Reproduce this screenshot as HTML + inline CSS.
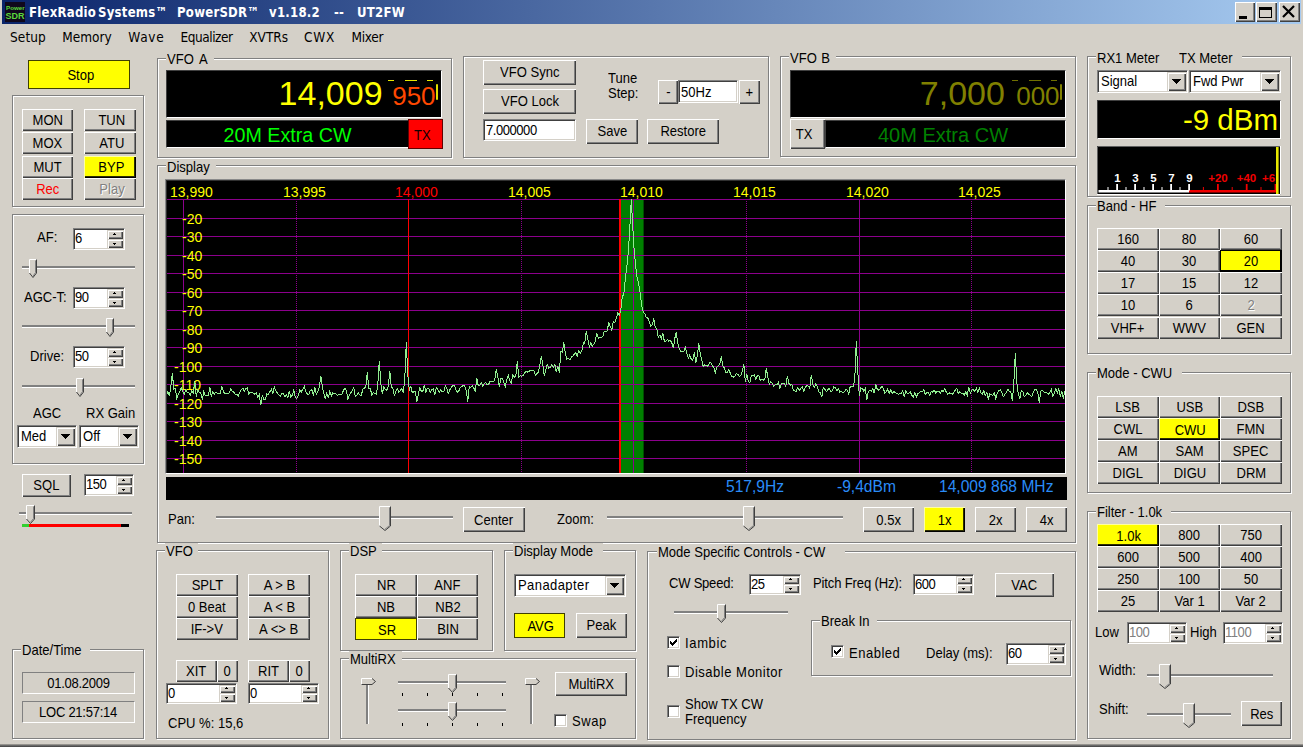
<!DOCTYPE html>
<html><head><meta charset="utf-8"><title>PowerSDR</title>
<style>
html,body{margin:0;padding:0}
body{width:1303px;height:747px;overflow:hidden;background:#d4d0c8;position:relative;
 font-family:"Liberation Sans",sans-serif;font-size:14.4px;color:#000}
.x{display:inline-block;transform:scaleX(.905);transform-origin:0 50%}
.xc{display:inline-block;transform:scaleX(.905);transform-origin:50% 50%}
div,svg{box-sizing:border-box}
.a{position:absolute}
.t{position:absolute;white-space:nowrap;line-height:16px;height:16px}
.b{position:absolute;text-align:center;background:#d4d0c8;white-space:nowrap;overflow:hidden;
 box-shadow:inset 1px 1px 0 #fff,inset -1px -1px 0 #404040,inset -2px -2px 0 #808080}
.b.y{background:#ffff00;box-shadow:inset 1px 1px 0 #ffffa0,inset -1px -1px 0 #000,inset -2px -2px 0 #303000}
.b.yf{background:#ffff00;box-shadow:inset 0 0 0 1px #404000}
.g{position:absolute;border:1px solid #808080;box-shadow:1px 1px 0 #fff,inset 1px 1px 0 #fff}
.gl{position:absolute;background:#d4d0c8;padding:0 2px 0 1px;line-height:16px;height:16px;white-space:nowrap}
.f{position:absolute;border:1px solid;border-color:#808080 #fff #fff #808080;padding-left:2px;white-space:nowrap;overflow:hidden;
 background:linear-gradient(#404040,#404040) 0 0/100% 1px no-repeat,linear-gradient(#404040,#404040) 0 0/1px 100% no-repeat,
 linear-gradient(#d4d0c8,#d4d0c8) 0 100%/100% 1px no-repeat,linear-gradient(#d4d0c8,#d4d0c8) 100% 0/1px 100% no-repeat,#fff}
.sb{position:absolute;right:1px;width:16px;background:#d4d0c8;
 box-shadow:inset 1px 1px 0 #d4d0c8,inset 2px 2px 0 #fff,inset -1px -1px 0 #404040,inset -2px -2px 0 #808080}
.cb{position:absolute;right:1px;top:1px;width:19px;background:#d4d0c8;
 box-shadow:inset 1px 1px 0 #d4d0c8,inset 2px 2px 0 #fff,inset -1px -1px 0 #404040,inset -2px -2px 0 #808080}
.tr{position:absolute;height:3px;background:#808080;border-bottom:1px solid #fff;border-top:1px solid #808080}
.trv{position:absolute;width:3px;background:#808080;border-right:1px solid #fff}
.ck{position:absolute;width:13px;height:13px;background:#fff;border:1px solid;border-color:#808080 #fff #fff #808080;box-shadow:inset 1px 1px 0 #404040,inset -1px -1px 0 #d4d0c8}
.sk{position:absolute;border:1px solid;border-color:#808080 #fff #fff #808080;text-align:center;white-space:nowrap}
.bk{position:absolute;background:#000;overflow:hidden}
#title{position:absolute;left:2px;top:0;width:1299px;height:24px;
 background:linear-gradient(90deg,#0a246a 0%,#a6caf0 100%);}
#title .tt{position:absolute;top:3px;color:#fff;font-family:"DejaVu Sans Condensed","DejaVu Sans",sans-serif;font-weight:bold;font-size:14px;letter-spacing:.27px;line-height:18px;white-space:nowrap;transform:scaleX(.93);transform-origin:0 50%}
.m{position:absolute;top:28px;font-family:"DejaVu Sans Condensed","DejaVu Sans",sans-serif;font-size:13.5px;line-height:18px;white-space:nowrap}
</style></head><body>

<div id="title">
<svg class="a" style="left:3px;top:2px" width="20" height="20" viewBox="0 0 20 20"><rect width="20" height="20" fill="#10081c"/><text x="1" y="8" font-family="Liberation Sans,sans-serif" font-size="6.2" font-weight="bold" fill="#5ad83c">Power</text><text x="0.5" y="16.5" font-family="Liberation Sans,sans-serif" font-size="9" font-weight="bold" fill="#5ad83c">SDR</text></svg>
<div class="tt" style="left:26.7px">FlexRadio</div>
<div class="tt" style="left:96.4px">Systems™</div>
<div class="tt" style="left:174.8px">PowerSDR™</div>
<div class="tt" style="left:267.3px">v1.18.2</div>
<div class="tt" style="left:332px">--</div>
<div class="tt" style="left:355.4px">UT2FW</div>
<div class="b" style="left:1233px;top:2px;width:20px;height:20px">
<div class="a" style="left:4px;top:14px;width:8px;height:3px;background:#000"></div>
</div>
<div class="b" style="left:1254px;top:2px;width:21px;height:20px">
<div class="a" style="left:3px;top:5px;width:13px;height:11px;border:1.5px solid #000;border-top-width:3px"></div>
</div>
<div class="b" style="left:1277px;top:2px;width:21px;height:20px">
<svg class="a" style="left:3px;top:3px" width="13" height="13" viewBox="0 0 13 13"><path d="M1 1L12 12M12 1L1 12" stroke="#000" stroke-width="2.2"/></svg>
</div>
</div>
<div class="m" style="left:10px;letter-spacing:0.1px">Setup</div>
<div class="m" style="left:62.3px;letter-spacing:0px">Memory</div>
<div class="m" style="left:128.3px;letter-spacing:0.7px">Wave</div>
<div class="m" style="left:180.5px;letter-spacing:-0.45px">Equalizer</div>
<div class="m" style="left:249.3px;letter-spacing:0px">XVTRs</div>
<div class="m" style="left:304px;letter-spacing:0.8px">CWX</div>
<div class="m" style="left:351.5px;letter-spacing:-0.3px">Mixer</div>
<div class="b yf" style="left:28px;top:60px;width:102px;height:29px;line-height:29px;"><span style="position:relative;left:1.5px;top:1px"><span class="xc">Stop</span></span></div>
<div class="g" style="left:12px;top:95px;width:132px;height:112px"></div>
<div class="b " style="left:22px;top:109px;width:51px;height:22px;line-height:22px;"><span class="xc">MON</span></div>
<div class="b " style="left:84px;top:109px;width:52px;height:22px;line-height:22px;"><span style="position:relative;left:1.5px;top:0px"><span class="xc">TUN</span></span></div>
<div class="b " style="left:22px;top:132px;width:51px;height:22px;line-height:22px;"><span class="xc">MOX</span></div>
<div class="b " style="left:84px;top:132px;width:52px;height:22px;line-height:22px;"><span style="position:relative;left:1.5px;top:0px"><span class="xc">ATU</span></span></div>
<div class="b " style="left:22px;top:156px;width:51px;height:22px;line-height:22px;"><span class="xc">MUT</span></div>
<div class="b y" style="left:84px;top:156px;width:52px;height:22px;line-height:22px;"><span style="position:relative;left:1.5px;top:0px"><span class="xc">BYP</span></span></div>
<div class="b " style="left:22px;top:178px;width:51px;height:22px;line-height:22px;color:#ff0000;"><span class="xc">Rec</span></div>
<div class="b " style="left:84px;top:178px;width:52px;height:22px;line-height:22px;color:#808080;text-shadow:1px 1px 0 #fff;"><span style="position:relative;left:1.5px;top:0px"><span class="xc">Play</span></span></div>
<div class="g" style="left:12px;top:214px;width:132px;height:250px"></div>
<div class="t" style="left:37px;top:229px;"><span class="x">AF:</span></div>
<div class="f" style="left:73px;top:228px;width:52px;height:22px;line-height:19px;color:#000;letter-spacing:-0.5px;padding-left:1px"><span class="x">6</span><div class="sb" style="top:1px;height:9px"><svg class="a" style="left:5px;top:3px" width="5" height="3" viewBox="0 0 5 3" shape-rendering="crispEdges"><path d="M2 0h1v1h-1zM1 1h3v1h-3z" fill="#000"/></svg></div><div class="sb" style="top:10px;height:9px"><svg class="a" style="left:5px;top:3px" width="5" height="3" viewBox="0 0 5 3" shape-rendering="crispEdges"><path d="M1 1h3v1h-3zM2 2h1v1h-1z" fill="#000"/></svg></div></div>
<div class="tr" style="left:22px;top:266px;width:113px"></div>
<svg class="a" style="left:28.5px;top:259px" width="9" height="20" viewBox="0 0 9 20"><polygon points="0,0 8,0 8,14 4.0,19 0,14" fill="#d4d0c8"/><polyline points="0.5,14 0.5,0.5 7.5,0.5" fill="none" stroke="#fff"/><polyline points="7.5,0.5 7.5,14 4.0,18.5 0.5,14" fill="none" stroke="#404040"/><polyline points="6.5,1.5 6.5,13.5 4.0,17.2" fill="none" stroke="#808080"/></svg>
<div class="t" style="left:24px;top:289px;"><span class="x">AGC-T:</span></div>
<div class="f" style="left:73px;top:287px;width:52px;height:22px;line-height:19px;color:#000;letter-spacing:-0.5px;padding-left:1px"><span class="x">90</span><div class="sb" style="top:1px;height:9px"><svg class="a" style="left:5px;top:3px" width="5" height="3" viewBox="0 0 5 3" shape-rendering="crispEdges"><path d="M2 0h1v1h-1zM1 1h3v1h-3z" fill="#000"/></svg></div><div class="sb" style="top:10px;height:9px"><svg class="a" style="left:5px;top:3px" width="5" height="3" viewBox="0 0 5 3" shape-rendering="crispEdges"><path d="M1 1h3v1h-3zM2 2h1v1h-1z" fill="#000"/></svg></div></div>
<div class="tr" style="left:22px;top:325px;width:113px"></div>
<svg class="a" style="left:106px;top:318px" width="9" height="20" viewBox="0 0 9 20"><polygon points="0,0 8,0 8,14 4.0,19 0,14" fill="#d4d0c8"/><polyline points="0.5,14 0.5,0.5 7.5,0.5" fill="none" stroke="#fff"/><polyline points="7.5,0.5 7.5,14 4.0,18.5 0.5,14" fill="none" stroke="#404040"/><polyline points="6.5,1.5 6.5,13.5 4.0,17.2" fill="none" stroke="#808080"/></svg>
<div class="t" style="left:30px;top:348px;"><span class="x">Drive:</span></div>
<div class="f" style="left:73px;top:346px;width:52px;height:22px;line-height:19px;color:#000;letter-spacing:-0.5px;padding-left:1px"><span class="x">50</span><div class="sb" style="top:1px;height:9px"><svg class="a" style="left:5px;top:3px" width="5" height="3" viewBox="0 0 5 3" shape-rendering="crispEdges"><path d="M2 0h1v1h-1zM1 1h3v1h-3z" fill="#000"/></svg></div><div class="sb" style="top:10px;height:9px"><svg class="a" style="left:5px;top:3px" width="5" height="3" viewBox="0 0 5 3" shape-rendering="crispEdges"><path d="M1 1h3v1h-3zM2 2h1v1h-1z" fill="#000"/></svg></div></div>
<div class="tr" style="left:22px;top:385px;width:113px"></div>
<svg class="a" style="left:76px;top:378px" width="9" height="20" viewBox="0 0 9 20"><polygon points="0,0 8,0 8,14 4.0,19 0,14" fill="#d4d0c8"/><polyline points="0.5,14 0.5,0.5 7.5,0.5" fill="none" stroke="#fff"/><polyline points="7.5,0.5 7.5,14 4.0,18.5 0.5,14" fill="none" stroke="#404040"/><polyline points="6.5,1.5 6.5,13.5 4.0,17.2" fill="none" stroke="#808080"/></svg>
<div class="t" style="left:33px;top:405px;"><span class="x">AGC</span></div>
<div class="t" style="left:86px;top:405px;"><span class="x">RX Gain</span></div>
<div class="f" style="left:17px;top:425px;width:60px;height:23px;line-height:21px;padding-left:3px;letter-spacing:0px"><span class="x">Med</span><div class="cb" style="height:19px"><svg class="a" style="left:5px;top:7px" width="9" height="5" viewBox="0 0 9 5" shape-rendering="crispEdges"><path d="M0 0h9v1h-9zM1 1h7v1h-7zM2 2h5v1h-5zM3 3h3v1h-3zM4 4h1v1h-1z" fill="#000"/></svg></div></div>
<div class="f" style="left:79px;top:425px;width:60px;height:23px;line-height:21px;padding-left:3px;letter-spacing:0px"><span class="x">Off</span><div class="cb" style="height:19px"><svg class="a" style="left:5px;top:7px" width="9" height="5" viewBox="0 0 9 5" shape-rendering="crispEdges"><path d="M0 0h9v1h-9zM1 1h7v1h-7zM2 2h5v1h-5zM3 3h3v1h-3zM4 4h1v1h-1z" fill="#000"/></svg></div></div>
<div class="b " style="left:22px;top:474px;width:49px;height:23px;line-height:23px;"><span class="xc">SQL</span></div>
<div class="f" style="left:84px;top:474px;width:50px;height:22px;line-height:19px;color:#000;letter-spacing:-0.5px;padding-left:1px"><span class="x">150</span><div class="sb" style="top:1px;height:9px"><svg class="a" style="left:5px;top:3px" width="5" height="3" viewBox="0 0 5 3" shape-rendering="crispEdges"><path d="M2 0h1v1h-1zM1 1h3v1h-3z" fill="#000"/></svg></div><div class="sb" style="top:10px;height:9px"><svg class="a" style="left:5px;top:3px" width="5" height="3" viewBox="0 0 5 3" shape-rendering="crispEdges"><path d="M1 1h3v1h-3zM2 2h1v1h-1z" fill="#000"/></svg></div></div>
<div class="tr" style="left:19px;top:512px;width:113px"></div>
<svg class="a" style="left:26px;top:505px" width="10" height="20" viewBox="0 0 10 20"><polygon points="0,0 9,0 9,14 4.5,19 0,14" fill="#d4d0c8"/><polyline points="0.5,14 0.5,0.5 8.5,0.5" fill="none" stroke="#fff"/><polyline points="8.5,0.5 8.5,14 4.5,18.5 0.5,14" fill="none" stroke="#404040"/><polyline points="7.5,1.5 7.5,13.5 4.5,17.2" fill="none" stroke="#808080"/></svg>
<div class="a" style="left:22px;top:524px;width:107px;height:3px;background:#ff0000"></div>
<div class="a" style="left:22px;top:524px;width:7px;height:3px;background:#30d030"></div>
<div class="a" style="left:121px;top:524px;width:8px;height:3px;background:#000"></div>
<div class="g" style="left:12px;top:649px;width:132px;height:90px"></div>
<div class="gl" style="left:21px;top:642px"><span class="x">Date/Time</span></div>
<div class="sk" style="left:22px;top:672px;width:113px;height:22px;line-height:20px;letter-spacing:-.3px"><span class="xc">01.08.2009</span></div>
<div class="sk" style="left:22px;top:701px;width:113px;height:22px;line-height:20px;letter-spacing:-.3px"><span class="xc">LOC 21:57:14</span></div>
<div class="g" style="left:157px;top:58px;width:295px;height:100px"></div>
<div class="gl" style="left:166px;top:51px;word-spacing:2.5px"><span class="x">VFO A</span></div>
<div class="bk" style="left:166px;top:70px;width:276px;height:48px;border:1px solid;border-color:#404040 #fff #fff #404040"><div class="a" style="left:111.6px;top:2.5px;font-size:34px;line-height:38px;color:#ffff00">14,009</div><div class="a" style="left:225.2px;top:10.4px;font-size:26px;line-height:30px;color:#ff4800">950</div><div class="a" style="left:221px;top:9px;width:6px;height:1px;background:#e8e800"></div><div class="a" style="left:238px;top:9px;width:12px;height:1px;background:#e8e800"></div><div class="a" style="left:260px;top:9px;width:6px;height:1px;background:#e8e800"></div><div class="a" style="left:269px;top:13px;width:2px;height:16px;background:#e0e000;border-radius:1px"></div></div>
<div class="bk" style="left:166px;top:120px;width:277px;height:28px;border:1px solid;border-color:#404040 #fff #fff #404040"><div class="a" style="left:56.5px;top:2px;font-size:19.7px;line-height:24px;color:#00ff00">20M Extra CW</div></div>
<div class="a" style="left:408px;top:119px;width:35px;height:30px;background:#ff0000;border:1px solid #600000;text-align:center;line-height:31px;font-size:14.4px;color:#100000;text-indent:-3px"><span class="xc">TX</span></div>
<div class="g" style="left:463px;top:56px;width:306px;height:102px"></div>
<div class="b " style="left:483px;top:60px;width:93px;height:25px;line-height:25px;"><span class="xc">VFO Sync</span></div>
<div class="b " style="left:483px;top:89px;width:93px;height:25px;line-height:25px;"><span class="xc">VFO Lock</span></div>
<div class="f" style="left:483px;top:119px;width:93px;height:22px;line-height:21px;letter-spacing:-.5px"><span class="x">7.000000</span></div>
<div class="b " style="left:586px;top:119px;width:52px;height:25px;line-height:25px;"><span class="xc">Save</span></div>
<div class="b " style="left:647px;top:119px;width:72px;height:25px;line-height:25px;"><span class="xc">Restore</span></div>
<div class="t" style="left:608px;top:70px;"><span class="x">Tune</span></div>
<div class="t" style="left:608px;top:85px;"><span class="x">Step:</span></div>
<div class="b " style="left:658px;top:80px;width:20px;height:24px;line-height:24px;"><span class="xc">-</span></div>
<div class="f" style="left:678px;top:80px;width:60px;height:23px;line-height:22px;"><span class="x">50Hz</span></div>
<div class="b " style="left:739px;top:80px;width:21px;height:24px;line-height:24px;"><span class="xc">+</span></div>
<div class="g" style="left:780px;top:56px;width:296px;height:101px"></div>
<div class="gl" style="left:789px;top:50px;word-spacing:1px"><span class="x">VFO B</span></div>
<div class="bk" style="left:790px;top:70px;width:276px;height:48px;border:1px solid;border-color:#404040 #fff #fff #404040"><div class="a" style="left:128.8px;top:2.5px;font-size:34px;line-height:38px;color:#808000">7,000</div><div class="a" style="left:225.2px;top:10.4px;font-size:26px;line-height:30px;color:#808000">000</div><div class="a" style="left:221px;top:9px;width:6px;height:1px;background:#707000"></div><div class="a" style="left:238px;top:9px;width:12px;height:1px;background:#707000"></div><div class="a" style="left:260px;top:9px;width:6px;height:1px;background:#707000"></div><div class="a" style="left:269px;top:13px;width:2px;height:16px;background:#808000;border-radius:1px"></div></div>
<div class="b " style="left:790px;top:119px;width:35px;height:30px;line-height:30px;"><span style="position:relative;left:-3px;top:0px"><span class="xc">TX</span></span></div>
<div class="bk" style="left:825px;top:120px;width:241px;height:28px;border:1px solid;border-color:#404040 #fff #fff #404040"><div class="a" style="left:52px;top:2px;font-size:20px;line-height:24px;color:#008000">40M Extra CW</div></div>
<div class="g" style="left:1087px;top:56px;width:204px;height:141px"></div>
<div class="gl" style="left:1096px;top:50px;width:90px"><span class="x">RX1 Meter</span></div>
<div class="gl" style="left:1178px;top:50px;width:64px"><span class="x">TX Meter</span></div>
<div class="f" style="left:1097px;top:70px;width:91px;height:23px;line-height:21px;padding-left:3px;letter-spacing:0px"><span class="x">Signal</span><div class="cb" style="height:19px"><svg class="a" style="left:5px;top:7px" width="9" height="5" viewBox="0 0 9 5" shape-rendering="crispEdges"><path d="M0 0h9v1h-9zM1 1h7v1h-7zM2 2h5v1h-5zM3 3h3v1h-3zM4 4h1v1h-1z" fill="#000"/></svg></div></div>
<div class="f" style="left:1189px;top:70px;width:92px;height:23px;line-height:21px;padding-left:3px;letter-spacing:0px"><span class="x">Fwd Pwr</span><div class="cb" style="height:19px"><svg class="a" style="left:5px;top:7px" width="9" height="5" viewBox="0 0 9 5" shape-rendering="crispEdges"><path d="M0 0h9v1h-9zM1 1h7v1h-7zM2 2h5v1h-5zM3 3h3v1h-3zM4 4h1v1h-1z" fill="#000"/></svg></div></div>
<div class="bk" style="left:1097px;top:100px;width:184px;height:39px;border:1px solid;border-color:#404040 #fff #fff #404040"><div class="a" style="right:2px;top:1.5px;font-size:29.5px;line-height:34px;color:#ffff00">-9 dBm</div></div>
<svg class="a" style="left:1097px;top:146px" width="184" height="49" viewBox="0 0 184 49"><rect width="184" height="49" fill="#000"/><path d="M0.5 49V0.5H184" fill="none" stroke="#606060"/><path d="M0 48.5H183.5V0" fill="none" stroke="#fff"/><rect x="1.5" y="44" width="90.5" height="2.5" fill="#fff"/><rect x="92" y="44" width="87" height="2.5" fill="#f00000"/><rect x="10.5" y="41" width="1" height="3.5" fill="#fff"/><rect x="19.2" y="38" width="1.8" height="6.5" fill="#fff"/><rect x="28.5" y="41" width="1" height="3.5" fill="#fff"/><rect x="37.2" y="38" width="1.8" height="6.5" fill="#fff"/><rect x="46.5" y="41" width="1" height="3.5" fill="#fff"/><rect x="55.2" y="38" width="1.8" height="6.5" fill="#fff"/><rect x="64.5" y="41" width="1" height="3.5" fill="#fff"/><rect x="73.2" y="38" width="1.8" height="6.5" fill="#fff"/><rect x="82.5" y="41" width="1" height="3.5" fill="#fff"/><rect x="91.2" y="38" width="1.8" height="6.5" fill="#fff"/><rect x="105.9" y="41" width="1" height="3.5" fill="#f00000"/><rect x="120.0" y="38" width="1.8" height="6.5" fill="#f00000"/><rect x="134.7" y="41" width="1" height="3.5" fill="#f00000"/><rect x="148.8" y="38" width="1.8" height="6.5" fill="#f00000"/><rect x="163.5" y="41" width="1" height="3.5" fill="#f00000"/><rect x="177.6" y="38" width="1.8" height="6.5" fill="#f00000"/><text x="20.5" y="36" text-anchor="middle" font-family="Liberation Sans,sans-serif" font-weight="bold" font-size="11.5" fill="#fff">1</text><text x="38.5" y="36" text-anchor="middle" font-family="Liberation Sans,sans-serif" font-weight="bold" font-size="11.5" fill="#fff">3</text><text x="56.5" y="36" text-anchor="middle" font-family="Liberation Sans,sans-serif" font-weight="bold" font-size="11.5" fill="#fff">5</text><text x="74.5" y="36" text-anchor="middle" font-family="Liberation Sans,sans-serif" font-weight="bold" font-size="11.5" fill="#fff">7</text><text x="92.5" y="36" text-anchor="middle" font-family="Liberation Sans,sans-serif" font-weight="bold" font-size="11.5" fill="#fff">9</text><text x="121" y="36" text-anchor="middle" font-family="Liberation Sans,sans-serif" font-weight="bold" font-size="11.5" fill="#f00000">+20</text><text x="149.5" y="36" text-anchor="middle" font-family="Liberation Sans,sans-serif" font-weight="bold" font-size="11.5" fill="#f00000">+40</text><text x="165" y="36" font-family="Liberation Sans,sans-serif" font-weight="bold" font-size="11.5" fill="#f00000">+6</text><rect x="179" y="1" width="2.6" height="47" fill="#e8e800"/></svg>
<div class="g" style="left:1087px;top:205px;width:204px;height:149px"></div>
<div class="gl" style="left:1096px;top:198px"><span class="x">Band - HF</span></div>
<div class="b " style="left:1097px;top:228px;width:62px;height:22px;line-height:22px;"><span class="xc">160</span></div>
<div class="b " style="left:1159px;top:228px;width:61px;height:22px;line-height:22px;"><span class="xc">80</span></div>
<div class="b " style="left:1220px;top:228px;width:62px;height:22px;line-height:22px;"><span class="xc">60</span></div>
<div class="b " style="left:1097px;top:250px;width:62px;height:22px;line-height:22px;"><span class="xc">40</span></div>
<div class="b " style="left:1159px;top:250px;width:61px;height:22px;line-height:22px;"><span class="xc">30</span></div>
<div class="b y" style="left:1220px;top:250px;width:62px;height:22px;line-height:22px;box-shadow:inset 0 0 0 1px #000,inset -2px -2px 0 #000;"><span class="xc">20</span></div>
<div class="b " style="left:1097px;top:272px;width:62px;height:22px;line-height:22px;"><span class="xc">17</span></div>
<div class="b " style="left:1159px;top:272px;width:61px;height:22px;line-height:22px;"><span class="xc">15</span></div>
<div class="b " style="left:1220px;top:272px;width:62px;height:22px;line-height:22px;"><span class="xc">12</span></div>
<div class="b " style="left:1097px;top:294px;width:62px;height:22px;line-height:22px;"><span class="xc">10</span></div>
<div class="b " style="left:1159px;top:294px;width:61px;height:22px;line-height:22px;"><span class="xc">6</span></div>
<div class="b " style="left:1220px;top:294px;width:62px;height:22px;line-height:22px;color:#808080;text-shadow:1px 1px 0 #fff;"><span class="xc">2</span></div>
<div class="b " style="left:1097px;top:317px;width:62px;height:22px;line-height:22px;"><span class="xc">VHF+</span></div>
<div class="b " style="left:1159px;top:317px;width:61px;height:22px;line-height:22px;"><span class="xc">WWV</span></div>
<div class="b " style="left:1220px;top:317px;width:62px;height:22px;line-height:22px;"><span class="xc">GEN</span></div>
<div class="g" style="left:1087px;top:372px;width:204px;height:121px"></div>
<div class="gl" style="left:1096px;top:365px"><span class="x">Mode - CWU</span></div>
<div class="b " style="left:1097px;top:396px;width:62px;height:22px;line-height:22px;"><span class="xc">LSB</span></div>
<div class="b " style="left:1159px;top:396px;width:61px;height:22px;line-height:22px;"><span class="xc">USB</span></div>
<div class="b " style="left:1220px;top:396px;width:62px;height:22px;line-height:22px;"><span class="xc">DSB</span></div>
<div class="b " style="left:1097px;top:418px;width:62px;height:22px;line-height:22px;"><span class="xc">CWL</span></div>
<div class="b y" style="left:1159px;top:418px;width:61px;height:22px;line-height:22px;"><span style="position:relative;left:1px;top:1px"><span class="xc">CWU</span></span></div>
<div class="b " style="left:1220px;top:418px;width:62px;height:22px;line-height:22px;"><span class="xc">FMN</span></div>
<div class="b " style="left:1097px;top:440px;width:62px;height:22px;line-height:22px;"><span class="xc">AM</span></div>
<div class="b " style="left:1159px;top:440px;width:61px;height:22px;line-height:22px;"><span class="xc">SAM</span></div>
<div class="b " style="left:1220px;top:440px;width:62px;height:22px;line-height:22px;"><span class="xc">SPEC</span></div>
<div class="b " style="left:1097px;top:462px;width:62px;height:22px;line-height:22px;"><span class="xc">DIGL</span></div>
<div class="b " style="left:1159px;top:462px;width:61px;height:22px;line-height:22px;"><span class="xc">DIGU</span></div>
<div class="b " style="left:1220px;top:462px;width:62px;height:22px;line-height:22px;"><span class="xc">DRM</span></div>
<div class="g" style="left:1087px;top:511px;width:204px;height:228px"></div>
<div class="gl" style="left:1096px;top:504px"><span class="x">Filter - 1.0k</span></div>
<div class="b y" style="left:1097px;top:524px;width:62px;height:22px;line-height:22px;"><span style="position:relative;left:1px;top:1px"><span class="xc">1.0k</span></span></div>
<div class="b " style="left:1159px;top:524px;width:61px;height:22px;line-height:22px;"><span class="xc">800</span></div>
<div class="b " style="left:1220px;top:524px;width:62px;height:22px;line-height:22px;"><span class="xc">750</span></div>
<div class="b " style="left:1097px;top:546px;width:62px;height:22px;line-height:22px;"><span class="xc">600</span></div>
<div class="b " style="left:1159px;top:546px;width:61px;height:22px;line-height:22px;"><span class="xc">500</span></div>
<div class="b " style="left:1220px;top:546px;width:62px;height:22px;line-height:22px;"><span class="xc">400</span></div>
<div class="b " style="left:1097px;top:568px;width:62px;height:22px;line-height:22px;"><span class="xc">250</span></div>
<div class="b " style="left:1159px;top:568px;width:61px;height:22px;line-height:22px;"><span class="xc">100</span></div>
<div class="b " style="left:1220px;top:568px;width:62px;height:22px;line-height:22px;"><span class="xc">50</span></div>
<div class="b " style="left:1097px;top:590px;width:62px;height:22px;line-height:22px;"><span class="xc">25</span></div>
<div class="b " style="left:1159px;top:590px;width:61px;height:22px;line-height:22px;"><span class="xc">Var 1</span></div>
<div class="b " style="left:1220px;top:590px;width:62px;height:22px;line-height:22px;"><span class="xc">Var 2</span></div>
<div class="t" style="left:1095px;top:624px;"><span class="x">Low</span></div>
<div class="f" style="left:1127px;top:622px;width:60px;height:22px;line-height:19px;color:#808080;letter-spacing:-0.5px;padding-left:1px"><span class="x">100</span><div class="sb" style="top:1px;height:9px"><svg class="a" style="left:5px;top:3px" width="5" height="3" viewBox="0 0 5 3" shape-rendering="crispEdges"><path d="M2 0h1v1h-1zM1 1h3v1h-3z" fill="#000"/></svg></div><div class="sb" style="top:10px;height:9px"><svg class="a" style="left:5px;top:3px" width="5" height="3" viewBox="0 0 5 3" shape-rendering="crispEdges"><path d="M1 1h3v1h-3zM2 2h1v1h-1z" fill="#000"/></svg></div></div>
<div class="t" style="left:1190px;top:624px;"><span class="x">High</span></div>
<div class="f" style="left:1223px;top:622px;width:60px;height:22px;line-height:19px;color:#808080;letter-spacing:-0.5px;padding-left:1px"><span class="x">1100</span><div class="sb" style="top:1px;height:9px"><svg class="a" style="left:5px;top:3px" width="5" height="3" viewBox="0 0 5 3" shape-rendering="crispEdges"><path d="M2 0h1v1h-1zM1 1h3v1h-3z" fill="#000"/></svg></div><div class="sb" style="top:10px;height:9px"><svg class="a" style="left:5px;top:3px" width="5" height="3" viewBox="0 0 5 3" shape-rendering="crispEdges"><path d="M1 1h3v1h-3zM2 2h1v1h-1z" fill="#000"/></svg></div></div>
<div class="t" style="left:1099px;top:662px;"><span class="x">Width:</span></div>
<div class="tr" style="left:1147px;top:674px;width:126px"></div>
<svg class="a" style="left:1159px;top:664px" width="13" height="26" viewBox="0 0 13 26"><polygon points="0,0 12,0 12,20 6.0,25 0,20" fill="#d4d0c8"/><polyline points="0.5,20 0.5,0.5 11.5,0.5" fill="none" stroke="#fff"/><polyline points="11.5,0.5 11.5,20 6.0,24.5 0.5,20" fill="none" stroke="#404040"/><polyline points="10.5,1.5 10.5,19.5 6.0,23.2" fill="none" stroke="#808080"/></svg>
<div class="t" style="left:1099px;top:701px;"><span class="x">Shift:</span></div>
<div class="tr" style="left:1147px;top:713px;width:84px"></div>
<svg class="a" style="left:1183px;top:703px" width="13" height="26" viewBox="0 0 13 26"><polygon points="0,0 12,0 12,20 6.0,25 0,20" fill="#d4d0c8"/><polyline points="0.5,20 0.5,0.5 11.5,0.5" fill="none" stroke="#fff"/><polyline points="11.5,0.5 11.5,20 6.0,24.5 0.5,20" fill="none" stroke="#404040"/><polyline points="10.5,1.5 10.5,19.5 6.0,23.2" fill="none" stroke="#808080"/></svg>
<div class="b " style="left:1241px;top:701px;width:41px;height:25px;line-height:25px;"><span style="position:relative;left:0px;top:1px"><span class="xc">Res</span></span></div>
<div class="g" style="left:157px;top:165px;width:919px;height:378px"></div>
<div class="gl" style="left:166px;top:159px"><span class="x">Display</span></div>
<svg class="a" style="left:166px;top:181px" width="899" height="292" viewBox="0 0 899 292"><rect width="899" height="292" fill="#000"/><rect x="454" y="18" width="23.6" height="274" fill="#008000"/><rect x="0" y="18" width="899" height="1" fill="#8c008c"/><rect x="0" y="37" width="899" height="1" fill="#8c008c"/><rect x="0" y="55" width="899" height="1" fill="#8c008c"/><rect x="0" y="74" width="899" height="1" fill="#8c008c"/><rect x="0" y="92" width="899" height="1" fill="#8c008c"/><rect x="0" y="111" width="899" height="1" fill="#8c008c"/><rect x="0" y="129" width="899" height="1" fill="#8c008c"/><rect x="0" y="148" width="899" height="1" fill="#8c008c"/><rect x="0" y="166" width="899" height="1" fill="#8c008c"/><rect x="0" y="185" width="899" height="1" fill="#8c008c"/><rect x="0" y="203" width="899" height="1" fill="#8c008c"/><rect x="0" y="222" width="899" height="1" fill="#8c008c"/><rect x="0" y="240" width="899" height="1" fill="#8c008c"/><rect x="0" y="259" width="899" height="1" fill="#8c008c"/><rect x="0" y="277" width="899" height="1" fill="#8c008c"/><rect x="17" y="18" width="1" height="292" fill="#8c008c"/><line x1="130.5" y1="18" x2="130.5" y2="292" stroke="#8c008c" stroke-dasharray="1,1"/><rect x="242" y="18" width="1" height="292" fill="#ff0000"/><line x1="355.5" y1="18" x2="355.5" y2="292" stroke="#8c008c" stroke-dasharray="1,1"/><rect x="467" y="18" width="1" height="292" fill="#8c008c"/><line x1="580.5" y1="18" x2="580.5" y2="292" stroke="#8c008c" stroke-dasharray="1,1"/><rect x="693" y="18" width="1" height="292" fill="#8c008c"/><line x1="805.5" y1="18" x2="805.5" y2="292" stroke="#8c008c" stroke-dasharray="1,1"/><rect x="453" y="18" width="2" height="292" fill="#ff0000"/><text transform="translate(4,16) scale(.91,1)" font-family="Liberation Sans,sans-serif" font-size="15.4" fill="#ffff00">13,990</text><text transform="translate(117,16) scale(.91,1)" font-family="Liberation Sans,sans-serif" font-size="15.4" fill="#ffff00">13,995</text><text transform="translate(229,16) scale(.91,1)" font-family="Liberation Sans,sans-serif" font-size="15.4" fill="#ff0000">14,000</text><text transform="translate(342,16) scale(.91,1)" font-family="Liberation Sans,sans-serif" font-size="15.4" fill="#ffff00">14,005</text><text transform="translate(454,16) scale(.91,1)" font-family="Liberation Sans,sans-serif" font-size="15.4" fill="#ffff00">14,010</text><text transform="translate(567,16) scale(.91,1)" font-family="Liberation Sans,sans-serif" font-size="15.4" fill="#ffff00">14,015</text><text transform="translate(680,16) scale(.91,1)" font-family="Liberation Sans,sans-serif" font-size="15.4" fill="#ffff00">14,020</text><text transform="translate(792,16) scale(.91,1)" font-family="Liberation Sans,sans-serif" font-size="15.4" fill="#ffff00">14,025</text><text transform="translate(16,42.5) scale(.91,1)" font-family="Liberation Sans,sans-serif" font-size="15.4" fill="#ffff00">-20</text><text transform="translate(16,61.0) scale(.91,1)" font-family="Liberation Sans,sans-serif" font-size="15.4" fill="#ffff00">-30</text><text transform="translate(16,79.5) scale(.91,1)" font-family="Liberation Sans,sans-serif" font-size="15.4" fill="#ffff00">-40</text><text transform="translate(16,98.0) scale(.91,1)" font-family="Liberation Sans,sans-serif" font-size="15.4" fill="#ffff00">-50</text><text transform="translate(16,116.5) scale(.91,1)" font-family="Liberation Sans,sans-serif" font-size="15.4" fill="#ffff00">-60</text><text transform="translate(16,135.0) scale(.91,1)" font-family="Liberation Sans,sans-serif" font-size="15.4" fill="#ffff00">-70</text><text transform="translate(16,153.5) scale(.91,1)" font-family="Liberation Sans,sans-serif" font-size="15.4" fill="#ffff00">-80</text><text transform="translate(16,172.0) scale(.91,1)" font-family="Liberation Sans,sans-serif" font-size="15.4" fill="#ffff00">-90</text><text transform="translate(8,190.5) scale(.91,1)" font-family="Liberation Sans,sans-serif" font-size="15.4" fill="#ffff00">-100</text><text transform="translate(8,209.0) scale(.91,1)" font-family="Liberation Sans,sans-serif" font-size="15.4" fill="#ffff00">-110</text><text transform="translate(8,227.5) scale(.91,1)" font-family="Liberation Sans,sans-serif" font-size="15.4" fill="#ffff00">-120</text><text transform="translate(8,246.0) scale(.91,1)" font-family="Liberation Sans,sans-serif" font-size="15.4" fill="#ffff00">-130</text><text transform="translate(8,264.5) scale(.91,1)" font-family="Liberation Sans,sans-serif" font-size="15.4" fill="#ffff00">-140</text><text transform="translate(8,283.0) scale(.91,1)" font-family="Liberation Sans,sans-serif" font-size="15.4" fill="#ffff00">-150</text><polyline points="0.3,214.7 1.8,210.7 3.3,215.0 4.8,205.9 6.3,192.0 7.8,208.0 9.3,207.8 10.8,217.3 12.3,213.6 13.8,210.5 15.3,206.6 16.8,210.5 18.3,213.2 19.8,208.7 21.3,211.7 22.8,211.4 24.3,214.3 25.8,209.9 27.3,211.7 28.8,200.2 30.3,215.5 31.8,208.8 33.3,211.6 34.8,211.7 36.3,218.5 37.8,210.3 39.3,214.6 40.8,214.7 42.3,214.8 43.8,206.0 45.3,216.1 46.8,210.4 48.3,213.1 49.8,211.1 51.3,212.3 52.8,212.5 54.3,212.4 55.8,205.0 57.3,210.3 58.8,212.7 60.3,212.3 61.8,212.5 63.3,211.8 64.8,207.3 66.3,210.6 67.8,211.1 69.3,213.5 70.8,213.0 72.3,214.8 73.8,211.2 75.3,208.4 76.8,207.0 78.3,210.0 79.8,207.7 81.3,206.6 82.8,213.1 84.3,211.0 85.8,211.1 87.3,212.1 88.8,213.4 90.3,211.9 91.8,215.9 93.3,213.5 94.8,224.4 96.3,213.7 97.8,218.6 99.3,218.1 100.8,212.8 102.3,213.6 103.8,210.8 105.3,208.3 106.8,212.6 108.3,206.2 109.8,209.8 111.3,211.8 112.8,213.7 114.3,215.4 115.8,212.6 117.3,212.7 118.8,215.7 120.3,213.6 121.8,216.4 123.3,210.2 124.8,216.3 126.3,213.9 127.8,209.2 129.3,216.5 130.8,217.5 132.3,214.6 133.8,208.8 135.3,210.9 136.8,208.2 138.3,205.2 139.8,210.6 141.3,213.0 142.8,213.9 144.3,209.3 145.8,208.7 147.3,214.6 148.8,206.6 150.3,213.0 151.8,210.4 153.3,206.4 154.8,194.8 156.3,205.4 157.8,212.2 159.3,218.3 160.8,211.8 162.3,217.0 163.8,210.4 165.3,215.1 166.8,211.8 168.3,212.9 169.8,212.9 171.3,214.2 172.8,213.6 174.3,213.2 175.8,213.8 177.3,209.6 178.8,207.2 180.3,209.1 181.8,218.0 183.3,214.6 184.8,211.9 186.3,209.6 187.8,206.6 189.3,215.9 190.8,214.1 192.3,212.0 193.8,213.8 195.3,214.4 196.8,208.2 198.3,207.2 199.8,206.1 201.3,191.1 202.8,207.6 204.3,207.6 205.8,213.8 207.3,211.7 208.8,212.1 210.3,213.2 211.8,203.6 213.3,180.0 214.8,202.0 216.3,213.0 217.8,205.6 219.3,208.2 220.8,209.2 222.3,204.8 223.8,190.1 225.3,205.9 226.8,206.7 228.3,214.4 229.8,210.8 231.3,207.6 232.8,211.3 234.3,209.8 235.8,207.3 237.3,212.2 238.8,197.2 240.3,161.4 241.8,194.0 243.3,208.9 244.8,205.5 246.3,211.6 247.8,210.9 249.3,210.5 250.8,220.6 252.3,213.5 253.8,207.1 255.3,210.0 256.8,210.4 258.3,204.0 259.8,210.9 261.3,207.4 262.8,207.3 264.3,211.2 265.8,208.7 267.3,207.7 268.8,213.8 270.3,206.7 271.8,208.4 273.3,211.4 274.8,208.3 276.3,211.0 277.8,210.9 279.3,204.5 280.8,207.3 282.3,212.6 283.8,208.8 285.3,206.8 286.8,204.3 288.3,204.2 289.8,208.9 291.3,211.2 292.8,210.0 294.3,206.3 295.8,205.6 297.3,204.4 298.8,205.0 300.3,209.9 301.8,220.6 303.3,205.4 304.8,206.6 306.3,204.3 307.8,207.2 309.3,209.9 310.8,197.1 312.3,205.0 313.8,204.1 315.3,201.6 316.8,205.3 318.3,202.7 319.8,201.7 321.3,203.9 322.8,203.0 324.3,200.0 325.8,200.3 327.3,200.8 328.8,198.8 330.3,188.3 331.8,195.9 333.3,205.9 334.8,197.2 336.3,197.1 337.8,201.8 339.3,205.9 340.8,198.6 342.3,194.6 343.8,199.9 345.3,201.8 346.8,194.1 348.3,196.3 349.8,194.6 351.3,180.5 352.8,196.3 354.3,194.6 355.8,195.2 357.3,194.7 358.8,191.9 360.3,190.4 361.8,191.1 363.3,190.1 364.8,189.6 366.3,189.3 367.8,189.0 369.3,194.2 370.8,192.7 372.3,191.3 373.8,184.8 375.3,175.3 376.8,183.5 378.3,195.3 379.8,188.3 381.3,183.4 382.8,187.3 384.3,186.4 385.8,183.7 387.3,186.1 388.8,183.4 390.3,190.9 391.8,185.3 393.3,191.6 394.8,170.7 396.3,171.2 397.8,161.4 399.3,172.3 400.8,178.2 402.3,177.5 403.8,178.9 405.3,176.2 406.8,175.1 408.3,173.2 409.8,171.8 411.3,175.1 412.8,169.5 414.3,172.2 415.8,170.3 417.3,161.9 418.8,162.1 420.3,149.8 421.8,158.3 423.3,165.7 424.8,161.8 426.3,165.2 427.8,163.1 429.3,160.1 430.8,152.1 432.3,157.1 433.8,156.7 435.3,156.6 436.8,155.5 438.3,150.4 439.8,150.6 441.3,149.6 442.8,141.1 444.3,145.7 445.8,149.3 447.3,140.4 448.8,142.0 450.3,137.5 451.8,132.0 453.3,134.3 454.8,129.0 456.3,115.8 457.8,113.2 459.3,97.7 460.8,86.0 462.3,71.2 463.8,46.8 465.3,18.0 466.8,46.8 468.3,71.2 469.8,86.0 471.3,97.7 472.8,103.4 474.3,112.8 475.8,125.5 477.3,131.1 478.8,132.8 480.3,136.8 481.8,136.9 483.3,140.6 484.8,144.9 486.3,143.5 487.8,137.4 489.3,146.5 490.8,147.4 492.3,156.5 493.8,154.0 495.3,157.8 496.8,152.0 498.3,160.1 499.8,160.6 501.3,158.3 502.8,160.1 504.3,159.2 505.8,161.7 507.3,167.2 508.8,157.4 510.3,151.3 511.8,162.5 513.3,167.6 514.8,170.9 516.3,170.9 517.8,170.9 519.3,166.1 520.8,172.6 522.3,177.1 523.8,174.0 525.3,178.2 526.8,179.5 528.3,171.4 529.8,181.8 531.3,174.5 532.8,162.4 534.3,173.2 535.8,179.2 537.3,185.7 538.8,183.7 540.3,184.7 541.8,185.1 543.3,182.1 544.8,181.4 546.3,184.5 547.8,186.7 549.3,191.5 550.8,186.3 552.3,185.0 553.8,183.4 555.3,175.3 556.8,184.6 558.3,187.0 559.8,191.3 561.3,191.3 562.8,188.2 564.3,192.3 565.8,195.5 567.3,196.2 568.8,195.0 570.3,192.8 571.8,193.4 573.3,195.3 574.8,194.5 576.3,190.6 577.8,182.7 579.3,200.5 580.8,192.6 582.3,200.6 583.8,201.6 585.3,195.0 586.8,194.4 588.3,193.8 589.8,198.6 591.3,194.9 592.8,194.4 594.3,199.4 595.8,198.0 597.3,199.1 598.8,198.4 600.3,187.4 601.8,196.0 603.3,203.0 604.8,200.8 606.3,202.6 607.8,205.3 609.3,203.5 610.8,203.8 612.3,201.3 613.8,207.5 615.3,203.2 616.8,202.2 618.3,202.9 619.8,205.3 621.3,194.8 622.8,202.2 624.3,204.1 625.8,203.3 627.3,209.0 628.8,210.0 630.3,210.4 631.8,206.2 633.3,209.7 634.8,207.5 636.3,205.9 637.8,210.4 639.3,206.3 640.8,204.3 642.3,205.1 643.8,207.3 645.3,193.8 646.8,203.3 648.3,206.3 649.8,202.8 651.3,205.5 652.8,210.7 654.3,211.6 655.8,216.1 657.3,206.2 658.8,208.1 660.3,210.5 661.8,208.9 663.3,207.3 664.8,210.6 666.3,209.7 667.8,206.0 669.3,206.9 670.8,209.9 672.3,207.7 673.8,211.0 675.3,210.4 676.8,211.3 678.3,210.9 679.8,208.3 681.3,209.1 682.8,212.9 684.3,205.1 685.8,205.4 687.3,205.5 688.8,197.5 690.3,160.5 691.8,190.8 693.3,214.5 694.8,207.0 696.3,207.1 697.8,210.2 699.3,207.1 700.8,218.7 702.3,210.7 703.8,209.1 705.3,210.5 706.8,207.6 708.3,212.4 709.8,203.6 711.3,208.4 712.8,209.2 714.3,207.9 715.8,205.1 717.3,207.5 718.8,211.8 720.3,210.7 721.8,208.0 723.3,212.4 724.8,208.6 726.3,212.6 727.8,210.2 729.3,211.9 730.8,212.3 732.3,213.3 733.8,212.9 735.3,212.7 736.8,209.7 738.3,216.0 739.8,210.0 741.3,212.6 742.8,212.2 744.3,210.9 745.8,214.4 747.3,216.1 748.8,211.8 750.3,216.2 751.8,212.6 753.3,211.8 754.8,210.5 756.3,210.6 757.8,208.9 759.3,213.5 760.8,211.4 762.3,211.9 763.8,214.3 765.3,210.5 766.8,211.1 768.3,209.3 769.8,212.0 771.3,210.2 772.8,210.2 774.3,212.6 775.8,209.4 777.3,210.6 778.8,207.9 780.3,211.1 781.8,213.2 783.3,211.8 784.8,212.7 786.3,213.2 787.8,211.8 789.3,208.9 790.8,207.3 792.3,212.6 793.8,210.6 795.3,212.4 796.8,212.0 798.3,214.3 799.8,210.4 801.3,214.3 802.8,206.2 804.3,212.2 805.8,209.0 807.3,208.7 808.8,210.6 810.3,206.9 811.8,211.5 813.3,207.0 814.8,211.4 816.3,213.4 817.8,209.4 819.3,214.5 820.8,211.6 822.3,217.9 823.8,212.9 825.3,213.4 826.8,214.4 828.3,211.8 829.8,217.6 831.3,212.3 832.8,209.8 834.3,208.6 835.8,210.9 837.3,215.9 838.8,213.3 840.3,211.4 841.8,208.2 843.3,210.8 844.8,210.4 846.3,220.1 847.8,202.5 849.3,172.2 850.8,201.7 852.3,212.8 853.8,217.7 855.3,209.8 856.8,210.7 858.3,215.7 859.8,214.0 861.3,211.7 862.8,213.4 864.3,214.4 865.8,215.3 867.3,210.8 868.8,208.7 870.3,208.5 871.8,211.7 873.3,222.4 874.8,210.0 876.3,209.6 877.8,211.0 879.3,211.3 880.8,211.8 882.3,213.4 883.8,211.4 885.3,208.8 886.8,215.3 888.3,212.0 889.8,207.5 891.3,211.7 892.8,207.4 894.3,215.4 895.8,210.0 897.3,217.6 898.8,210.3" fill="none" stroke="#90ee90" stroke-width="1" shape-rendering="crispEdges"/></svg>
<div class="a" style="left:165px;top:179px;width:901px;height:295px;border:1px solid;border-color:#8a8a8a #fff #fff #8a8a8a;box-shadow:inset 1px 1px 0 #303030"></div>
<div class="bk" style="left:166px;top:477px;width:901px;height:23px"></div>
<div class="t" style="left:726px;top:478px;font-size:15.6px;color:#2a8cf8;line-height:17px">517,9Hz</div>
<div class="t" style="left:837px;top:478px;font-size:15.6px;color:#2a8cf8;line-height:17px">-9,4dBm</div>
<div class="t" style="left:939px;top:478px;font-size:15.6px;color:#2a8cf8;line-height:17px">14,009 868 MHz</div>
<div class="t" style="left:168px;top:511px;"><span class="x">Pan:</span></div>
<div class="tr" style="left:216px;top:516px;width:237px"></div>
<svg class="a" style="left:378.5px;top:506px" width="13" height="26" viewBox="0 0 13 26"><polygon points="0,0 12,0 12,20 6.0,25 0,20" fill="#d4d0c8"/><polyline points="0.5,20 0.5,0.5 11.5,0.5" fill="none" stroke="#fff"/><polyline points="11.5,0.5 11.5,20 6.0,24.5 0.5,20" fill="none" stroke="#404040"/><polyline points="10.5,1.5 10.5,19.5 6.0,23.2" fill="none" stroke="#808080"/></svg>
<div class="b " style="left:463px;top:507px;width:62px;height:25px;line-height:25px;"><span style="position:relative;left:0px;top:1px"><span class="xc">Center</span></span></div>
<div class="t" style="left:557px;top:511px;"><span class="x">Zoom:</span></div>
<div class="tr" style="left:607px;top:516px;width:236px"></div>
<svg class="a" style="left:742.5px;top:506px" width="13" height="26" viewBox="0 0 13 26"><polygon points="0,0 12,0 12,20 6.0,25 0,20" fill="#d4d0c8"/><polyline points="0.5,20 0.5,0.5 11.5,0.5" fill="none" stroke="#fff"/><polyline points="11.5,0.5 11.5,20 6.0,24.5 0.5,20" fill="none" stroke="#404040"/><polyline points="10.5,1.5 10.5,19.5 6.0,23.2" fill="none" stroke="#808080"/></svg>
<div class="b " style="left:863px;top:507px;width:51px;height:25px;line-height:25px;"><span style="position:relative;left:0px;top:1px"><span class="xc">0.5x</span></span></div>
<div class="b y" style="left:924px;top:507px;width:41px;height:25px;line-height:25px;"><span style="position:relative;left:0px;top:1px"><span class="xc">1x</span></span></div>
<div class="b " style="left:975px;top:507px;width:41px;height:25px;line-height:25px;"><span style="position:relative;left:0px;top:1px"><span class="xc">2x</span></span></div>
<div class="b " style="left:1026px;top:507px;width:41px;height:25px;line-height:25px;"><span style="position:relative;left:0px;top:1px"><span class="xc">4x</span></span></div>
<div class="g" style="left:156px;top:550px;width:173px;height:189px"></div>
<div class="gl" style="left:165px;top:543px"><span class="x">VFO</span></div>
<div class="b " style="left:176px;top:574px;width:62px;height:22px;line-height:22px;"><span class="xc">SPLT</span></div>
<div class="b " style="left:176px;top:596px;width:62px;height:22px;line-height:22px;"><span class="xc">0 Beat</span></div>
<div class="b " style="left:176px;top:618px;width:62px;height:22px;line-height:22px;"><span class="xc">IF-&gt;V</span></div>
<div class="b " style="left:248px;top:574px;width:62px;height:22px;line-height:22px;"><span class="xc">A &gt; B</span></div>
<div class="b " style="left:248px;top:596px;width:62px;height:22px;line-height:22px;"><span class="xc">A &lt; B</span></div>
<div class="b " style="left:248px;top:618px;width:62px;height:22px;line-height:22px;"><span class="xc">A &lt;&gt; B</span></div>
<div class="b " style="left:176px;top:660px;width:41px;height:22px;line-height:22px;"><span class="xc">XIT</span></div>
<div class="b " style="left:217px;top:660px;width:21px;height:22px;line-height:22px;"><span class="xc">0</span></div>
<div class="b " style="left:248px;top:660px;width:41px;height:22px;line-height:22px;"><span class="xc">RIT</span></div>
<div class="b " style="left:289px;top:660px;width:21px;height:22px;line-height:22px;"><span class="xc">0</span></div>
<div class="f" style="left:166px;top:683px;width:71px;height:21px;line-height:18px;color:#000;letter-spacing:-0.5px;padding-left:1px"><span class="x">0</span><div class="sb" style="top:1px;height:8px"><svg class="a" style="left:5px;top:2px" width="5" height="3" viewBox="0 0 5 3" shape-rendering="crispEdges"><path d="M2 0h1v1h-1zM1 1h3v1h-3z" fill="#000"/></svg></div><div class="sb" style="top:9px;height:9px"><svg class="a" style="left:5px;top:3px" width="5" height="3" viewBox="0 0 5 3" shape-rendering="crispEdges"><path d="M1 1h3v1h-3zM2 2h1v1h-1z" fill="#000"/></svg></div></div>
<div class="f" style="left:248px;top:683px;width:71px;height:21px;line-height:18px;color:#000;letter-spacing:-0.5px;padding-left:1px"><span class="x">0</span><div class="sb" style="top:1px;height:8px"><svg class="a" style="left:5px;top:2px" width="5" height="3" viewBox="0 0 5 3" shape-rendering="crispEdges"><path d="M2 0h1v1h-1zM1 1h3v1h-3z" fill="#000"/></svg></div><div class="sb" style="top:9px;height:9px"><svg class="a" style="left:5px;top:3px" width="5" height="3" viewBox="0 0 5 3" shape-rendering="crispEdges"><path d="M1 1h3v1h-3zM2 2h1v1h-1z" fill="#000"/></svg></div></div>
<div class="t" style="left:168px;top:715px;"><span class="x">CPU %: 15,6</span></div>
<div class="g" style="left:340px;top:550px;width:153px;height:101px"></div>
<div class="gl" style="left:349px;top:543px"><span class="x">DSP</span></div>
<div class="b " style="left:355px;top:574px;width:62px;height:22px;line-height:22px;"><span class="xc">NR</span></div>
<div class="b " style="left:417px;top:574px;width:61px;height:22px;line-height:22px;"><span class="xc">ANF</span></div>
<div class="b " style="left:355px;top:596px;width:62px;height:22px;line-height:22px;"><span class="xc">NB</span></div>
<div class="b " style="left:417px;top:596px;width:61px;height:22px;line-height:22px;"><span class="xc">NB2</span></div>
<div class="b yf" style="left:355px;top:618px;width:62px;height:22px;line-height:22px;"><span style="position:relative;left:1px;top:1px"><span class="xc">SR</span></span></div>
<div class="b " style="left:417px;top:618px;width:61px;height:22px;line-height:22px;"><span class="xc">BIN</span></div>
<div class="g" style="left:504px;top:550px;width:132px;height:101px"></div>
<div class="gl" style="left:513px;top:543px"><span class="x">Display Mode</span></div>
<div class="f" style="left:514px;top:574px;width:112px;height:23px;line-height:21px;padding-left:3px;letter-spacing:0.45px"><span class="x">Panadapter</span><div class="cb" style="height:19px"><svg class="a" style="left:5px;top:7px" width="9" height="5" viewBox="0 0 9 5" shape-rendering="crispEdges"><path d="M0 0h9v1h-9zM1 1h7v1h-7zM2 2h5v1h-5zM3 3h3v1h-3zM4 4h1v1h-1z" fill="#000"/></svg></div></div>
<div class="b yf" style="left:514px;top:613px;width:51px;height:25px;line-height:25px;"><span style="position:relative;left:1px;top:1px"><span class="xc">AVG</span></span></div>
<div class="b " style="left:576px;top:613px;width:51px;height:25px;line-height:25px;"><span class="xc">Peak</span></div>
<div class="g" style="left:340px;top:658px;width:296px;height:81px"></div>
<div class="gl" style="left:349px;top:651px"><span class="x">MultiRX</span></div>
<div class="b " style="left:555px;top:672px;width:72px;height:24px;line-height:24px;"><span class="xc">MultiRX</span></div>
<div class="ck" style="left:554px;top:714px"></div>
<div class="t" style="left:572px;top:713px;letter-spacing:0.6px;"><span class="x">Swap</span></div>
<div class="trv" style="left:366px;top:685px;height:39px"></div>
<svg class="a" style="left:361px;top:678px" width="16" height="8" viewBox="0 0 16 8"><polygon points="0,0 11,0 15,3.5 11,7 0,7" fill="#d4d0c8"/><polyline points="0.5,7 0.5,0.5 11,0.5" fill="none" stroke="#fff"/><polyline points="11,0.5 14.5,3.5 11,6.5 0.5,6.5" fill="none" stroke="#404040"/></svg>
<div class="trv" style="left:530px;top:685px;height:39px"></div>
<svg class="a" style="left:525px;top:678px" width="16" height="8" viewBox="0 0 16 8"><polygon points="0,0 11,0 15,3.5 11,7 0,7" fill="#d4d0c8"/><polyline points="0.5,7 0.5,0.5 11,0.5" fill="none" stroke="#fff"/><polyline points="11,0.5 14.5,3.5 11,6.5 0.5,6.5" fill="none" stroke="#404040"/></svg>
<div class="tr" style="left:398px;top:681px;width:108px"></div>
<svg class="a" style="left:448px;top:674px" width="10" height="20" viewBox="0 0 10 20"><polygon points="0,0 9,0 9,14 4.5,19 0,14" fill="#d4d0c8"/><polyline points="0.5,14 0.5,0.5 8.5,0.5" fill="none" stroke="#fff"/><polyline points="8.5,0.5 8.5,14 4.5,18.5 0.5,14" fill="none" stroke="#404040"/><polyline points="7.5,1.5 7.5,13.5 4.5,17.2" fill="none" stroke="#808080"/></svg>
<div class="tr" style="left:398px;top:709px;width:108px"></div>
<svg class="a" style="left:448px;top:702px" width="10" height="20" viewBox="0 0 10 20"><polygon points="0,0 9,0 9,14 4.5,19 0,14" fill="#d4d0c8"/><polyline points="0.5,14 0.5,0.5 8.5,0.5" fill="none" stroke="#fff"/><polyline points="8.5,0.5 8.5,14 4.5,18.5 0.5,14" fill="none" stroke="#404040"/><polyline points="7.5,1.5 7.5,13.5 4.5,17.2" fill="none" stroke="#808080"/></svg>
<div class="a" style="left:402px;top:693px;width:1px;height:3px;background:#000"></div>
<div class="a" style="left:402px;top:723px;width:1px;height:3px;background:#000"></div>
<div class="a" style="left:427px;top:693px;width:1px;height:3px;background:#000"></div>
<div class="a" style="left:427px;top:723px;width:1px;height:3px;background:#000"></div>
<div class="a" style="left:452px;top:693px;width:1px;height:3px;background:#000"></div>
<div class="a" style="left:452px;top:723px;width:1px;height:3px;background:#000"></div>
<div class="a" style="left:477px;top:693px;width:1px;height:3px;background:#000"></div>
<div class="a" style="left:477px;top:723px;width:1px;height:3px;background:#000"></div>
<div class="a" style="left:502px;top:693px;width:1px;height:3px;background:#000"></div>
<div class="a" style="left:502px;top:723px;width:1px;height:3px;background:#000"></div>
<div class="g" style="left:647px;top:551px;width:429px;height:189px"></div>
<div class="gl" style="left:657px;top:544px"><span class="x">Mode Specific Controls - CW</span></div>
<div class="t" style="left:669px;top:575px;letter-spacing:-0.25px;"><span class="x">CW Speed:</span></div>
<div class="f" style="left:749px;top:574px;width:52px;height:21px;line-height:18px;color:#000;letter-spacing:-0.5px;padding-left:1px"><span class="x">25</span><div class="sb" style="top:1px;height:8px"><svg class="a" style="left:5px;top:2px" width="5" height="3" viewBox="0 0 5 3" shape-rendering="crispEdges"><path d="M2 0h1v1h-1zM1 1h3v1h-3z" fill="#000"/></svg></div><div class="sb" style="top:9px;height:9px"><svg class="a" style="left:5px;top:3px" width="5" height="3" viewBox="0 0 5 3" shape-rendering="crispEdges"><path d="M1 1h3v1h-3zM2 2h1v1h-1z" fill="#000"/></svg></div></div>
<div class="t" style="left:813px;top:575px;letter-spacing:-0.15px;"><span class="x">Pitch Freq (Hz):</span></div>
<div class="f" style="left:913px;top:574px;width:61px;height:21px;line-height:18px;color:#000;letter-spacing:-0.5px;padding-left:1px"><span class="x">600</span><div class="sb" style="top:1px;height:8px"><svg class="a" style="left:5px;top:2px" width="5" height="3" viewBox="0 0 5 3" shape-rendering="crispEdges"><path d="M2 0h1v1h-1zM1 1h3v1h-3z" fill="#000"/></svg></div><div class="sb" style="top:9px;height:9px"><svg class="a" style="left:5px;top:3px" width="5" height="3" viewBox="0 0 5 3" shape-rendering="crispEdges"><path d="M1 1h3v1h-3zM2 2h1v1h-1z" fill="#000"/></svg></div></div>
<div class="b " style="left:995px;top:573px;width:59px;height:24px;line-height:24px;"><span class="xc">VAC</span></div>
<div class="tr" style="left:674px;top:611px;width:114px"></div>
<svg class="a" style="left:717px;top:604px" width="10" height="20" viewBox="0 0 10 20"><polygon points="0,0 9,0 9,14 4.5,19 0,14" fill="#d4d0c8"/><polyline points="0.5,14 0.5,0.5 8.5,0.5" fill="none" stroke="#fff"/><polyline points="8.5,0.5 8.5,14 4.5,18.5 0.5,14" fill="none" stroke="#404040"/><polyline points="7.5,1.5 7.5,13.5 4.5,17.2" fill="none" stroke="#808080"/></svg>
<div class="ck" style="left:667px;top:636px"><svg width="7" height="7" viewBox="0 0 7 7" shape-rendering="crispEdges" style="position:absolute;left:2px;top:2px"><path d="M0 2h1v3h-1zM1 3h1v3h-1zM2 4h1v3h-1zM3 3h1v3h-1zM4 2h1v3h-1zM5 1h1v3h-1zM6 0h1v3h-1z" fill="#000"/></svg></div>
<div class="t" style="left:685px;top:635px;letter-spacing:0.7px;"><span class="x">Iambic</span></div>
<div class="ck" style="left:667px;top:665px"></div>
<div class="t" style="left:685px;top:664px;letter-spacing:0.55px;"><span class="x">Disable Monitor</span></div>
<div class="ck" style="left:667px;top:705px"></div>
<div class="t" style="left:685px;top:696px;"><span class="x">Show TX CW</span></div>
<div class="t" style="left:685px;top:711px;"><span class="x">Frequency</span></div>
<div class="g" style="left:811px;top:620px;width:260px;height:56px"></div>
<div class="gl" style="left:820px;top:613px"><span class="x">Break In</span></div>
<div class="ck" style="left:831px;top:645px"><svg width="7" height="7" viewBox="0 0 7 7" shape-rendering="crispEdges" style="position:absolute;left:2px;top:2px"><path d="M0 2h1v3h-1zM1 3h1v3h-1zM2 4h1v3h-1zM3 3h1v3h-1zM4 2h1v3h-1zM5 1h1v3h-1zM6 0h1v3h-1z" fill="#000"/></svg></div>
<div class="t" style="left:849px;top:645px;letter-spacing:0.55px;"><span class="x">Enabled</span></div>
<div class="t" style="left:926px;top:645px;"><span class="x">Delay (ms):</span></div>
<div class="f" style="left:1006px;top:643px;width:60px;height:22px;line-height:19px;color:#000;letter-spacing:-0.5px;padding-left:1px"><span class="x">60</span><div class="sb" style="top:1px;height:9px"><svg class="a" style="left:5px;top:3px" width="5" height="3" viewBox="0 0 5 3" shape-rendering="crispEdges"><path d="M2 0h1v1h-1zM1 1h3v1h-3z" fill="#000"/></svg></div><div class="sb" style="top:10px;height:9px"><svg class="a" style="left:5px;top:3px" width="5" height="3" viewBox="0 0 5 3" shape-rendering="crispEdges"><path d="M1 1h3v1h-3zM2 2h1v1h-1z" fill="#000"/></svg></div></div>
<div class="a" style="left:0;top:744px;width:1303px;height:3px;background:linear-gradient(#b0aca4,#707070 40%,#404040)"></div>
</body></html>
